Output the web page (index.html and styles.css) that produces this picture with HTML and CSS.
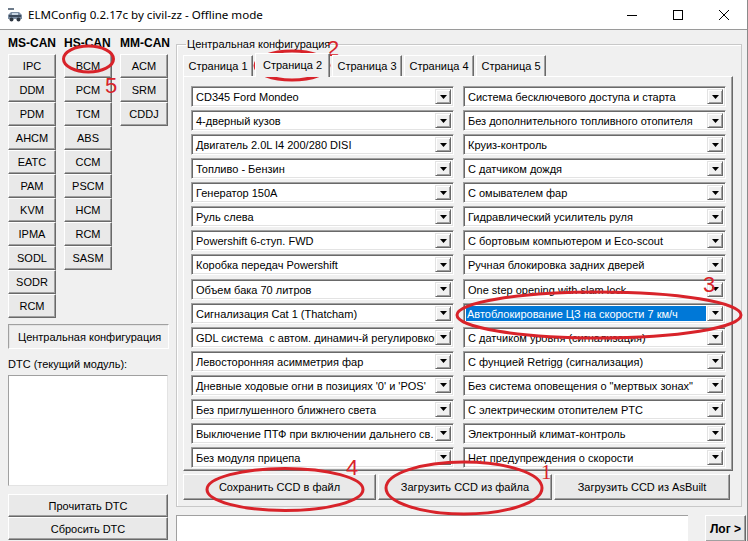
FILE: index.html
```html
<!DOCTYPE html>
<html lang="ru">
<head>
<meta charset="utf-8">
<title>ELMConfig</title>
<link rel="stylesheet" href="styles.css">
</head>
<body>
<div class="window">
  <div class="titlebar">
    <svg class="appicon" width="16" height="16" viewBox="0 0 16 16">
      <rect x="1" y="1" width="6" height="2" fill="#6d7b8a"/>
      <path d="M1 8 L4 5 L12 5 L15 8 L15 12 L1 12 Z" fill="#7c8ea3"/>
      <rect x="2" y="8" width="12" height="2" fill="#3c4a5c"/>
      <circle cx="4.5" cy="12.5" r="2" fill="#2d3640"/>
      <circle cx="11.5" cy="12.5" r="2" fill="#2d3640"/>
      <rect x="5" y="6" width="6" height="2" fill="#c9d6e3"/>
    </svg>
    <span class="title">ELMConfig 0.2.17c by civil-zz - Offline mode</span>
    <div class="controls">
      <span class="ctl"><svg width="10" height="10" viewBox="0 0 10 10"><path d="M0 5.5 H10" stroke="#000" stroke-width="1"/></svg></span>
      <span class="ctl"><svg width="10" height="10" viewBox="0 0 10 10"><rect x="0.5" y="0.5" width="9" height="9" fill="none" stroke="#000" stroke-width="1"/></svg></span>
      <span class="ctl"><svg width="10" height="10" viewBox="0 0 10 10"><path d="M0 0 L10 10 M10 0 L0 10" stroke="#000" stroke-width="1"/></svg></span>
    </div>
  </div>

  <div class="client">
    <div class="left">
      <div class="cans">
        <div class="cancol">
          <div class="canhead">MS-CAN</div>
          <div class="stack">
            <div class="btn">IPC</div><div class="btn">DDM</div><div class="btn">PDM</div><div class="btn">AHCM</div>
            <div class="btn">EATC</div><div class="btn">PAM</div><div class="btn">KVM</div><div class="btn">IPMA</div>
            <div class="btn">SODL</div><div class="btn">SODR</div><div class="btn">RCM</div>
          </div>
        </div>
        <div class="cancol">
          <div class="canhead">HS-CAN</div>
          <div class="stack">
            <div class="btn">BCM</div><div class="btn">PCM</div><div class="btn">TCM</div><div class="btn">ABS</div>
            <div class="btn">CCM</div><div class="btn">PSCM</div><div class="btn">HCM</div><div class="btn">RCM</div>
            <div class="btn">SASM</div>
          </div>
        </div>
        <div class="cancol">
          <div class="canhead">MM-CAN</div>
          <div class="stack">
            <div class="btn">ACM</div><div class="btn">SRM</div><div class="btn">CDDJ</div>
          </div>
        </div>
      </div>
      <div class="curmod">Центральная конфигурация</div>
      <div class="dtclabel">DTC (текущий модуль):</div>
      <div class="dtclist"></div>
      <div class="btn wide">Прочитать DTC</div>
      <div class="btn wide">Сбросить DTC</div>
    </div>

    <div class="right">
      <fieldset class="group">
        <legend>Центральная конфигурация</legend>
        <div class="tabs">
          <div class="tab">Страница 1</div>
          <div class="tab active">Страница 2</div>
          <div class="tab">Страница 3</div>
          <div class="tab">Страница 4</div>
          <div class="tab">Страница 5</div>
        </div>
        <div class="tabpanel">
          <div class="combo"><span class="val">CD345 Ford Mondeo</span><span class="drop"></span></div>
          <div class="combo"><span class="val">Система бесключевого доступа и старта</span><span class="drop"></span></div>
          <div class="combo"><span class="val">4-дверный кузов</span><span class="drop"></span></div>
          <div class="combo"><span class="val">Без дополнительного топливного отопителя</span><span class="drop"></span></div>
          <div class="combo"><span class="val">Двигатель 2.0L I4 200/280 DISI</span><span class="drop"></span></div>
          <div class="combo"><span class="val">Круиз-контроль</span><span class="drop"></span></div>
          <div class="combo"><span class="val">Топливо - Бензин</span><span class="drop"></span></div>
          <div class="combo"><span class="val">С датчиком дождя</span><span class="drop"></span></div>
          <div class="combo"><span class="val">Генератор 150A</span><span class="drop"></span></div>
          <div class="combo"><span class="val">С омывателем фар</span><span class="drop"></span></div>
          <div class="combo"><span class="val">Руль слева</span><span class="drop"></span></div>
          <div class="combo"><span class="val">Гидравлический усилитель руля</span><span class="drop"></span></div>
          <div class="combo"><span class="val">Powershift 6-ступ. FWD</span><span class="drop"></span></div>
          <div class="combo"><span class="val">С бортовым компьютером и Eco-scout</span><span class="drop"></span></div>
          <div class="combo"><span class="val">Коробка передач Powershift</span><span class="drop"></span></div>
          <div class="combo"><span class="val">Ручная блокировка задних дверей</span><span class="drop"></span></div>
          <div class="combo"><span class="val">Объем бака 70 литров</span><span class="drop"></span></div>
          <div class="combo"><span class="val">One step opening with slam lock</span><span class="drop"></span></div>
          <div class="combo"><span class="val">Сигнализация Cat 1 (Thatcham)</span><span class="drop"></span></div>
          <div class="combo selected"><span class="val">Автоблокирование ЦЗ на скорости 7 км/ч</span><span class="drop"></span></div>
          <div class="combo"><span class="val">GDL система&nbsp; с автом. динамич-й регулировкой фар</span><span class="drop"></span></div>
          <div class="combo"><span class="val">С датчиком уровня (сигнализация)</span><span class="drop"></span></div>
          <div class="combo"><span class="val">Левосторонняя асимметрия фар</span><span class="drop"></span></div>
          <div class="combo"><span class="val">С фунцией Retrigg (сигнализация)</span><span class="drop"></span></div>
          <div class="combo"><span class="val">Дневные ходовые огни в позициях '0' и 'POS'</span><span class="drop"></span></div>
          <div class="combo"><span class="val">Без система оповещения о "мертвых зонах"</span><span class="drop"></span></div>
          <div class="combo"><span class="val">Без приглушенного ближнего света</span><span class="drop"></span></div>
          <div class="combo"><span class="val">С электрическим отопителем PTC</span><span class="drop"></span></div>
          <div class="combo"><span class="val">Выключение ПТФ при включении дальнего св.</span><span class="drop"></span></div>
          <div class="combo"><span class="val">Электронный климат-контроль</span><span class="drop"></span></div>
          <div class="combo"><span class="val">Без модуля прицепа</span><span class="drop"></span></div>
          <div class="combo"><span class="val">Нет предупреждения о скорости</span><span class="drop"></span></div>
        </div>
        <div class="actions">
          <div class="btn act">Сохранить CCD в файл</div>
          <div class="btn act">Загрузить CCD из файла</div>
          <div class="btn act">Загрузить CCD из AsBuilt</div>
        </div>
      </fieldset>
      <div class="logrow">
        <div class="logfield"></div>
        <div class="btn logbtn">Лог &gt;</div>
      </div>
    </div>
  </div>

  <svg class="annot" width="748" height="541" viewBox="0 0 748 541">
    <g fill="none" stroke="#d8232a" stroke-width="3">
      <ellipse cx="88.5" cy="59" rx="25" ry="13"/>
      <ellipse cx="292" cy="65.5" rx="37" ry="14.5"/>
      <ellipse cx="599" cy="315" rx="142" ry="23"/>
      <ellipse cx="285" cy="489.5" rx="78" ry="21"/>
      <ellipse cx="464" cy="488" rx="78" ry="26"/>
    </g>
    <g fill="#d8232a" font-family="Liberation Sans, Arial, sans-serif" font-size="22">
      <text x="105" y="93">5</text>
      <text x="327" y="56">2</text>
      <text x="703" y="292">3</text>
      <text x="346" y="475">4</text>
      <text x="541" y="479" font-family="Liberation Serif, serif" font-size="21">1</text>
    </g>
  </svg>
</div>
</body>
</html>
```

FILE: styles.css
```css
* { box-sizing: border-box; }
html, body { margin: 0; padding: 0; }
body {
  width: 748px;
  height: 541px;
  overflow: hidden;
  background: #f0f0f0;
  font-family: "Liberation Sans", Arial, sans-serif;
  font-size: 11px;
  color: #000;
}
.window {
  position: relative;
  width: 748px;
  height: 541px;
  border-right: 1px solid #8a8a8a;
  overflow: hidden;
}

/* title bar */
.titlebar {
  height: 30px;
  background: #fff;
  border-bottom: 1px solid #9a9a9a;
  display: flex;
  align-items: center;
}
.appicon { margin-left: 7px; margin-right: 5px; flex: none; }
.title {
  font-family: "Noto Sans", "Open Sans", sans-serif;
  font-size: 11.6px;
  color: #000;
  flex: 1;
  white-space: nowrap;
}
.controls { display: flex; height: 29px; }
.ctl {
  width: 46px;
  display: flex;
  align-items: center;
  justify-content: center;
}

/* client */
.client {
  display: flex;
  height: 511px;
}
.left {
  width: 176px;
  flex: none;
  padding: 6px 0 0 8px;
  display: flex;
  flex-direction: column;
}
.cans { display: flex; gap: 8px; }
.cancol { width: 48px; }
.canhead {
  font-weight: bold;
  font-size: 12px;
  line-height: 14px;
  height: 14px;
  margin-bottom: 4px;
  white-space: nowrap;
}
.stack { display: flex; flex-direction: column; }

.btn {
  background: #e9e9e9;
  border-top: 1px solid #ffffff;
  border-left: 1px solid #ffffff;
  border-right: 1px solid #696969;
  border-bottom: 1px solid #696969;
  box-shadow: inset -1px -1px 0 #a0a0a0;
  display: flex;
  align-items: center;
  justify-content: center;
  white-space: nowrap;
}
.stack .btn { height: 24px; font-size: 11px; }

.curmod {
  margin-top: 6px;
  width: 161px;
  height: 25px;
  border-top: 1px solid #a0a0a0;
  border-left: 1px solid #a0a0a0;
  border-right: 1px solid #ffffff;
  border-bottom: 1px solid #ffffff;
  box-shadow: inset 1px 1px 0 #e3e3e3;
  display: flex;
  align-items: center;
  padding-left: 9px;
  font-size: 11px;
  white-space: nowrap;
}
.dtclabel {
  margin-top: 8px;
  height: 14px;
  line-height: 14px;
  font-size: 11px;
}
.dtclist {
  margin-top: 4px;
  width: 160px;
  height: 111px;
  background: #fff;
  border-top: 1px solid #a0a0a0;
  border-left: 1px solid #a0a0a0;
  border-right: 1px solid #e3e3e3;
  border-bottom: 1px solid #e3e3e3;
}
.btn.wide {
  width: 160px;
  height: 23px;
  font-size: 11px;
}
.dtclist + .btn.wide { margin-top: 8px; }

/* right side */
.right {
  flex: 1;
  min-width: 0;
  padding: 8px 5px 0 0;
  display: flex;
  flex-direction: column;
}
.group {
  margin: 0;
  padding: 1px 8px 6px 6px;
  border: 1px solid #c8c8c8;
  box-shadow: 1px 1px 0 #fff inset;
  min-width: 0;
  height: 470px;
}
.group legend {
  padding: 0 1px;
  margin-left: 3px;
  font-size: 11px;
  line-height: 13px;
}
.tabs {
  display: flex;
  align-items: flex-end;
  gap: 2px;
  height: 24px;
  position: relative;
  z-index: 1;
}
.tab {
  width: 70px;
  height: 21px;
  flex: none;
  background: #f0f0f0;
  border-top: 1px solid #fff;
  border-left: 1px solid #fff;
  border-right: 1px solid #696969;
  box-shadow: inset -1px 0 0 #a0a0a0;
  display: flex;
  align-items: center;
  justify-content: center;
  font-size: 11px;
  white-space: nowrap;
}
.tab.active {
  width: 75px;
  height: 24px;
  margin-bottom: -1px;
  padding-bottom: 2px;
  position: relative;
}
.tabpanel {
  border-top: 1px solid #fff;
  border-left: 1px solid #fff;
  border-right: 1px solid #696969;
  border-bottom: 1px solid #696969;
  box-shadow: inset -1px -1px 0 #a0a0a0;
  padding: 9px 7px 2px 7px;
  display: grid;
  grid-template-columns: 263px 263px;
  column-gap: 9px;
  row-gap: 3px;
  height: 395px;
}
.combo {
  height: 21px;
  background: #fff;
  border-top: 1px solid #a0a0a0;
  border-left: 1px solid #a0a0a0;
  border-right: 1px solid #fff;
  border-bottom: 1px solid #fff;
  box-shadow: inset 1px 1px 0 #696969, inset -1px -1px 0 #e3e3e3;
  display: flex;
  align-items: stretch;
  padding: 2px;
  overflow: hidden;
}
.combo .val {
  flex: 1;
  min-width: 0;
  overflow: hidden;
  white-space: nowrap;
  font-size: 11px;
  line-height: 17px;
  padding-left: 2px;
}
.combo.selected .val {
  background: #0078d7;
  color: #fff;
  margin-right: 1px;
  padding-left: 1px;
}
.combo .drop {
  width: 16px;
  flex: none;
  background: #f0f0f0 url("data:image/svg+xml,%3Csvg xmlns='http://www.w3.org/2000/svg' width='7' height='4'%3E%3Cpath d='M0 0H7L3.5 4Z' fill='%23000'/%3E%3C/svg%3E") no-repeat center;
  border-top: 1px solid #e3e3e3;
  border-left: 1px solid #e3e3e3;
  border-right: 1px solid #696969;
  border-bottom: 1px solid #696969;
  box-shadow: inset 1px 1px 0 #fff, inset -1px -1px 0 #a0a0a0;
}
.actions {
  display: flex;
  gap: 2px;
  margin-top: 3px;
}
.btn.act {
  height: 26px;
  flex: none;
  font-size: 11px;
}
.actions .act:nth-child(1) { width: 193px; }
.actions .act:nth-child(2) { width: 174px; }
.actions .act:nth-child(3) { width: 176px; }

.logrow {
  display: flex;
  margin-top: 8px;
  margin-right: -4px;
  gap: 17px;
}
.logfield {
  width: 512px;
  height: 27px;
  flex: none;
  background: #fff;
  border-top: 1px solid #a0a0a0;
  border-left: 1px solid #a0a0a0;
}
.btn.logbtn {
  width: 41px;
  height: 27px;
  flex: none;
  font-weight: bold;
  font-size: 12px;
}

.annot {
  position: absolute;
  left: 0;
  top: 0;
  pointer-events: none;
}
```
